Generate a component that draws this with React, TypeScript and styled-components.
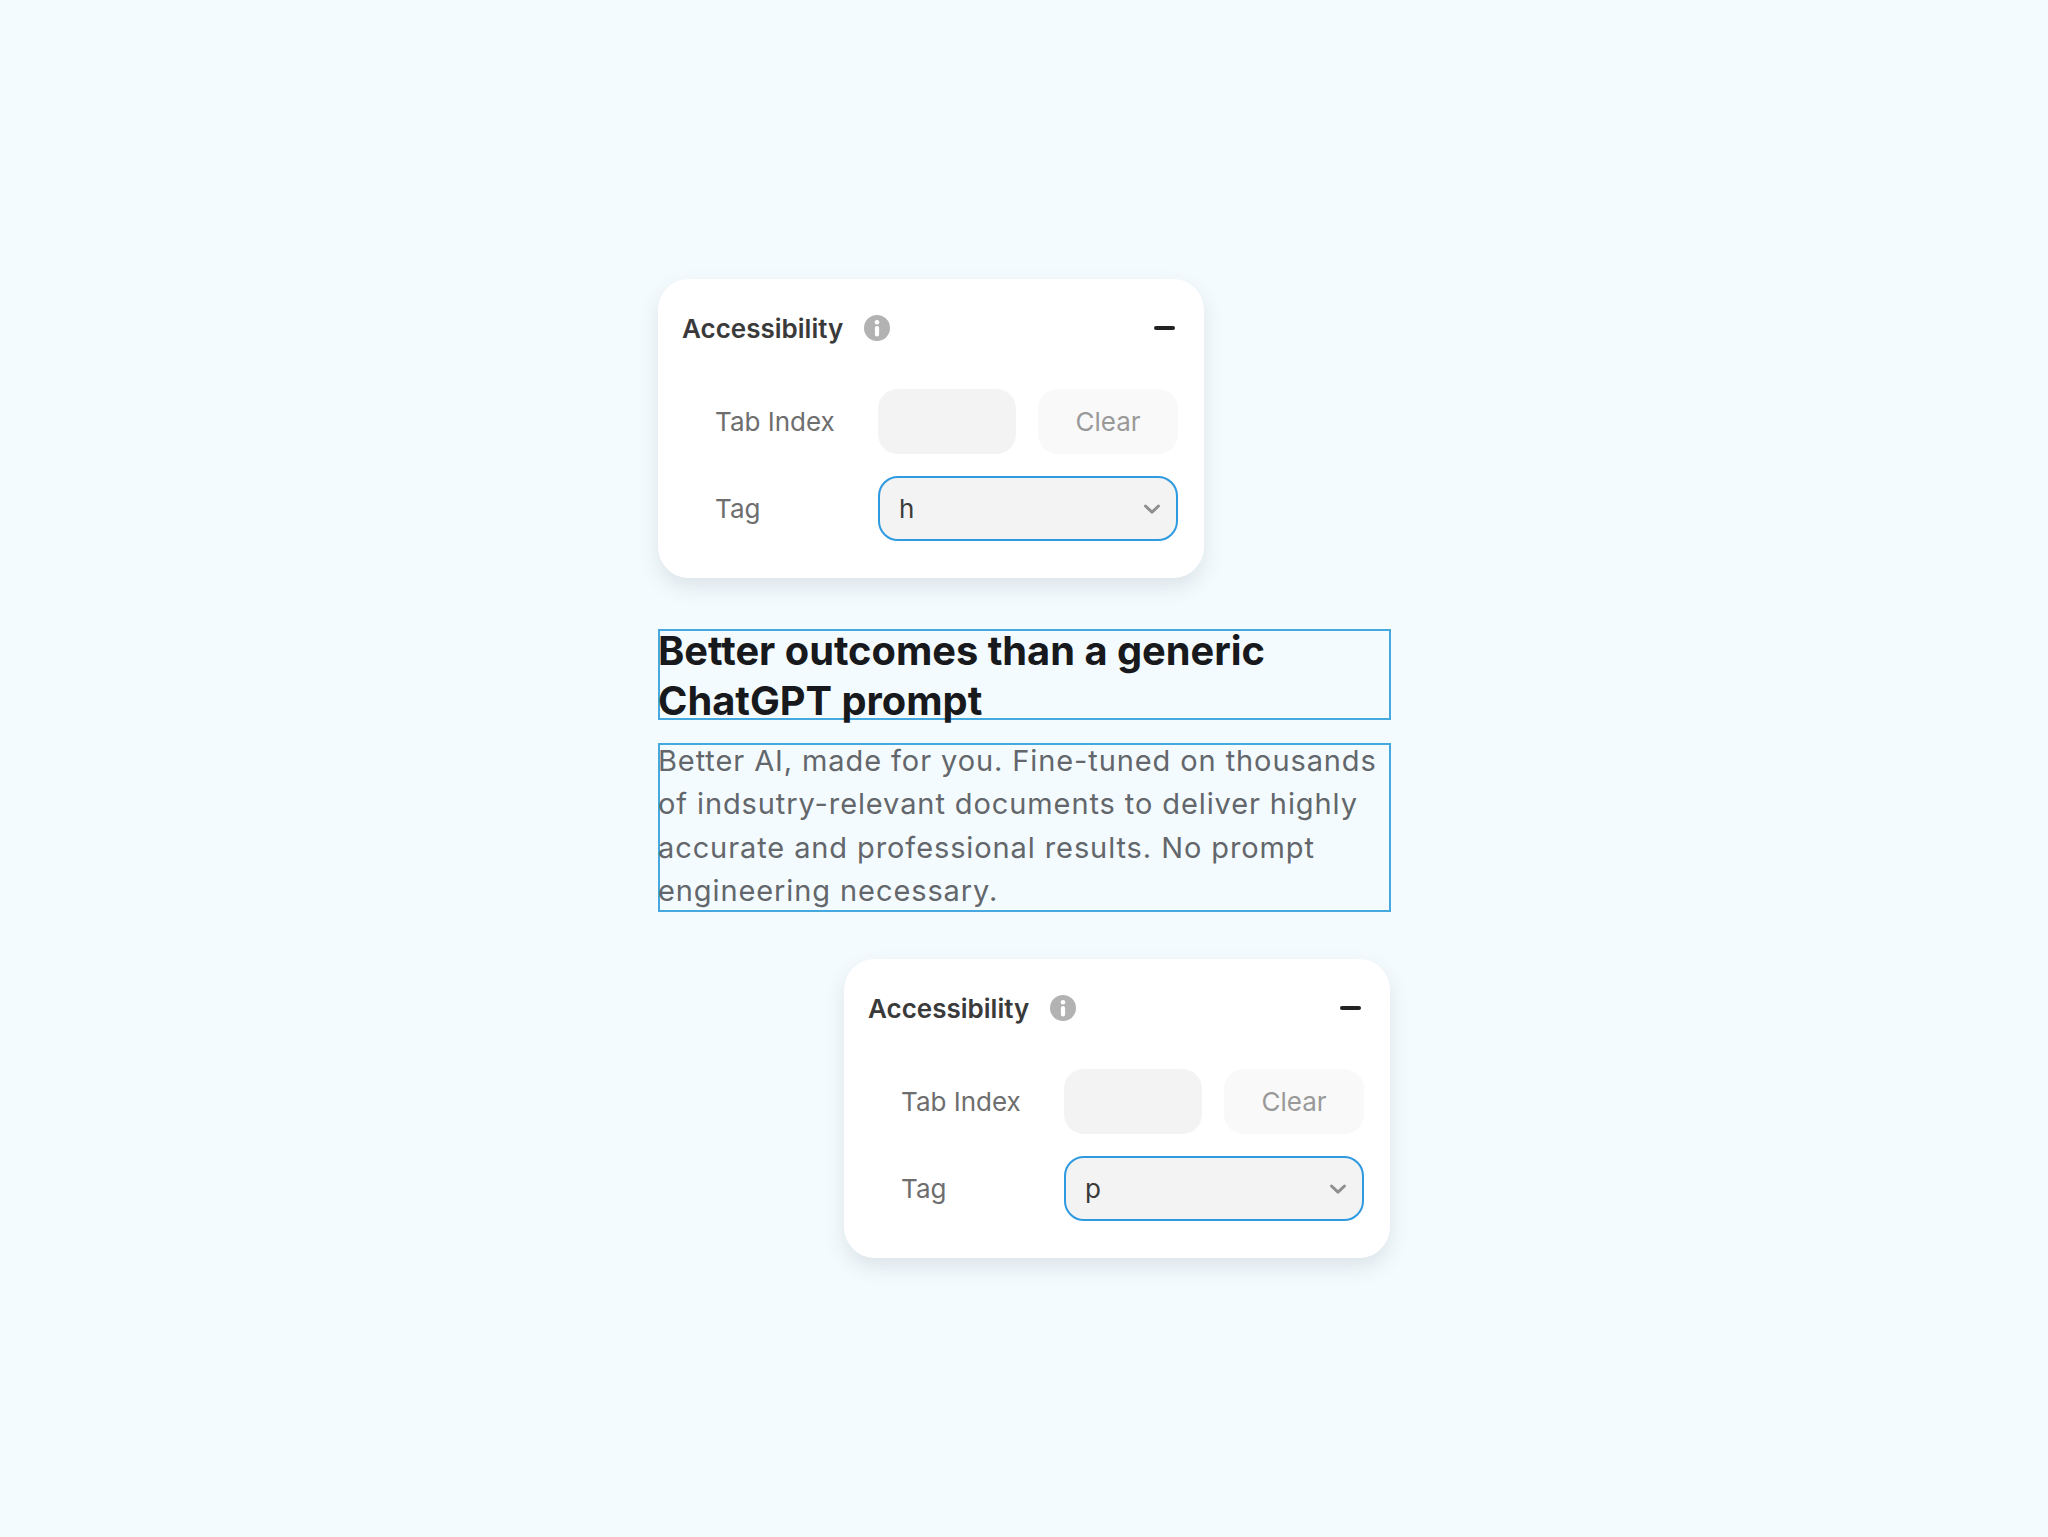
import React from "react";
import styled, { createGlobalStyle } from "styled-components";

const Global = createGlobalStyle`
  html, body { margin: 0; padding: 0; background: #f4fbfe; }
  * { box-sizing: border-box; }
`;

const Page = styled.main`
  min-height: 1537px;
  padding: 279px 0 0 1px;
  display: flex;
  justify-content: center;
  background: #f4fbfe;
  font-family: Inter, "Liberation Sans", sans-serif;
`;

const Column = styled.div`
  width: 733px;
  display: flex;
  flex-direction: column;
`;

const Card = styled.section<{ $offset?: boolean }>`
  width: 546px;
  height: 299px;
  align-self: ${(p) => (p.$offset ? "flex-end" : "flex-start")};
  margin-top: ${(p) => (p.$offset ? "47px" : "0")};
  margin-right: ${(p) => (p.$offset ? "1px" : "0")};
  margin-bottom: ${(p) => (p.$offset ? "0" : "51px")};
  padding: 24px 26px 36px 24px;
  background: #fff;
  border-radius: 31px;
  box-shadow: 0 9px 20px rgba(60, 80, 90, 0.13);
  display: flex;
  flex-direction: column;
`;

const Header = styled.header`
  height: 50px;
  display: flex;
  align-items: center;
  margin-bottom: 36px;
`;

const Title = styled.h3`
  margin: 0;
  font-size: 26px;
  font-weight: 600;
  color: #3a3a3a;
`;

const InfoIcon = styled.svg`
  width: 26px;
  height: 26px;
  margin-left: 21px;
`;

const Minus = styled.span`
  margin-left: auto;
  margin-right: 3px;
  width: 21px;
  height: 4px;
  border-radius: 2px;
  background: #222;
`;

const Row = styled.div`
  display: grid;
  grid-template-columns: 163px 138px 162px;
  height: 65px;
  padding-left: 33px;
  align-items: center;
  & + & { margin-top: 22px; }
`;

const Label = styled.span`
  font-size: 26px;
  color: #6e6e6e;
`;

const Field = styled.div`
  height: 65px;
  border-radius: 20px;
  background: #f3f3f3;
`;

const ClearButton = styled.button`
  height: 65px;
  margin-left: 22px;
  width: 140px;
  border: 0;
  border-radius: 20px;
  background: #f9f9f9;
  color: #999;
  font: 400 26px Inter, "Liberation Sans", sans-serif;
`;

const SelectBox = styled.div`
  grid-column: 2 / span 2;
  width: 300px;
  height: 65px;
  padding: 0 15px 0 19px;
  border: 2.5px solid #2f9ae0;
  border-radius: 20px;
  background: #f3f3f3;
  display: flex;
  align-items: center;
  justify-content: space-between;
  font-size: 26px;
  color: #3a3a3a;
`;

const TextFrame = styled.div<{ $height: number; $gap: number }>`
  height: ${(p) => p.$height}px;
  margin-top: ${(p) => p.$gap}px;
  border: 2px solid #45a8de;
`;

const Heading = styled.h2`
  margin: -5.5px 0 0 -2px;
  font-size: 39.8px;
  font-weight: 700;
  line-height: 50px;
  color: #17191c;
`;

const Body = styled.p`
  margin: -6px 0 0 -2px;
  font-size: 29px;
  line-height: 43.3px;
  letter-spacing: 0.9px;
  color: #63676b;
`;

function Panel({ tag, offset }: { tag: string; offset?: boolean }) {
  return (
    <Card $offset={offset}>
      <Header>
        <Title>Accessibility</Title>
        <InfoIcon viewBox="0 0 26 26" aria-hidden="true">
          <circle cx="13" cy="13" r="13" fill="#b2b2b2" />
          <circle cx="13" cy="7.2" r="2.3" fill="#fff" />
          <rect x="10.9" y="11" width="4.2" height="10.5" rx="2.1" fill="#fff" />
        </InfoIcon>
        <Minus />
      </Header>
      <Row>
        <Label>Tab Index</Label>
        <Field />
        <ClearButton>Clear</ClearButton>
      </Row>
      <Row>
        <Label>Tag</Label>
        <SelectBox>
          {tag}
          <svg width="18" height="12" viewBox="0 0 18 12" aria-hidden="true">
            <path d="M2.5 3 9 9.2 15.5 3" fill="none" stroke="#8f8f8f" strokeWidth="3" strokeLinecap="round" strokeLinejoin="round" />
          </svg>
        </SelectBox>
      </Row>
    </Card>
  );
}

export default function App() {
  return (
    <>
      <Global />
      <Page>
        <Column>
          <Panel tag="h" />
          <TextFrame $height={91} $gap={0}>
            <Heading>Better outcomes than a generic ChatGPT prompt</Heading>
          </TextFrame>
          <TextFrame $height={169} $gap={23}>
            <Body>
              Better AI, made for you. Fine-tuned on thousands of indsutry-relevant documents to deliver highly accurate and professional results. No prompt engineering necessary.
            </Body>
          </TextFrame>
          <Panel tag="p" offset />
        </Column>
      </Page>
    </>
  );
}
